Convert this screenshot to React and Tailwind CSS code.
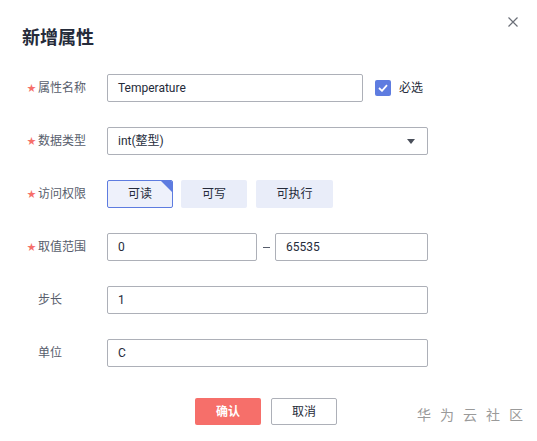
import { useState } from "react";

const font = { fontFamily: 'Roboto, "Noto Sans CJK SC", sans-serif' };

function Label({ text, required }) {
  return (
    <div className="w-[107px] shrink-0 pl-[27px] flex items-center whitespace-nowrap text-[12px] text-[#575d6c]">
      <span className="w-[11px] text-[9px] text-[#f66f6a] leading-none">
        {required ? "★" : ""}
      </span>
      <span>{text}</span>
    </div>
  );
}

function TextBox({ value, className = "" }) {
  return (
    <div
      className={`h-[28px] border border-[#adb0b8] rounded-[2px] flex items-center px-[10px] text-[12px] text-[#252b3a] bg-white ${className}`}
    >
      {value}
    </div>
  );
}

export default function App() {
  const [access, setAccess] = useState("read");
  const [required, setRequired] = useState(true);

  const perms = [
    { key: "read", text: "可读", w: "w-[66px]" },
    { key: "write", text: "可写", w: "w-[66px]" },
    { key: "exec", text: "可执行", w: "w-[77px]" },
  ];

  return (
    <div className="relative w-[537px] h-[441px] bg-white overflow-hidden" style={font}>
      {/* close */}
      <button className="absolute left-[508px] top-[17px] w-[10px] h-[10px]">
        <svg width="10" height="10" viewBox="0 0 10 10">
          <path d="M0.5 0.5 L9.5 9.5 M9.5 0.5 L0.5 9.5" stroke="#6b6f78" strokeWidth="1.2" />
        </svg>
      </button>

      <div className="pt-[24px]">
        <h2 className="pl-[22px] h-[27px] leading-[27px] text-[18px] font-bold text-[#252b3a]">
          新增属性
        </h2>

        <div className="mt-[23px] flex flex-col gap-[25px]">
          {/* name */}
          <div className="flex h-[28px]">
            <Label text="属性名称" required />
            <TextBox value="Temperature" className="w-[256px]" />
            <label
              className="ml-[12px] flex items-center gap-[8px] text-[12px] text-[#252b3a] cursor-pointer"
              onClick={() => setRequired(!required)}
            >
              <span
                className={`w-[16px] h-[16px] rounded-[2px] flex items-center justify-center ${
                  required ? "bg-[#5e7ce0]" : "border border-[#adb0b8]"
                }`}
              >
                {required && (
                  <svg width="10" height="8" viewBox="0 0 10 8">
                    <path d="M1 4 L4 6.8 L9 1.2" stroke="white" strokeWidth="1.8" fill="none" />
                  </svg>
                )}
              </span>
              必选
            </label>
          </div>

          {/* type */}
          <div className="flex h-[28px]">
            <Label text="数据类型" required />
            <div className="w-[321px] h-[28px] border border-[#adb0b8] rounded-[2px] flex items-center justify-between pl-[10px] pr-[12px] text-[12px] text-[#252b3a]">
              <span>int(整型)</span>
              <svg width="8" height="5" viewBox="0 0 8 5">
                <polygon points="0,0 8,0 4,5" fill="#4a4f5a" />
              </svg>
            </div>
          </div>

          {/* access */}
          <div className="flex h-[28px]">
            <Label text="访问权限" required />
            <div className="flex">
              {perms.map((p, i) => {
                const on = access === p.key;
                return (
                  <button
                    key={p.key}
                    onClick={() => setAccess(p.key)}
                    className={`relative h-[28px] ${p.w} ${i === 1 ? "ml-[8px]" : i === 2 ? "ml-[9px]" : ""} rounded-[2px] text-[12px] text-[#252b3a] overflow-hidden ${
                      on ? "bg-[#eef1fb] border border-[#5e7ce0]" : "bg-[#e9edf9]"
                    }`}
                  >
                    {p.text}
                    {on && (
                      <svg className="absolute right-0 top-0" width="11" height="11" viewBox="0 0 11 11">
                        <polygon points="0,0 11,0 11,11" fill="#5e7ce0" />
                      </svg>
                    )}
                  </button>
                );
              })}
            </div>
          </div>

          {/* range */}
          <div className="flex h-[28px]">
            <Label text="取值范围" required />
            <div className="w-[321px] flex items-center">
              <TextBox value="0" className="w-[150px]" />
              <div className="w-[18px] flex justify-center">
                <span className="w-[7px] h-px bg-[#575d6c]"></span>
              </div>
              <TextBox value="65535" className="w-[153px]" />
            </div>
          </div>

          {/* step */}
          <div className="flex h-[28px]">
            <Label text="步长" />
            <TextBox value="1" className="w-[321px]" />
          </div>

          {/* unit */}
          <div className="flex h-[28px]">
            <Label text="单位" />
            <TextBox value="C" className="w-[321px]" />
          </div>
        </div>

        <div className="mt-[31px] flex justify-center gap-[10px] pr-[5px]">
          <button className="w-[66px] h-[27px] rounded-[2px] bg-[#f66f6a] text-white text-[12px] font-bold">
            确认
          </button>
          <button className="w-[66px] h-[27px] rounded-[2px] border border-[#adb0b8] bg-white text-[#252b3a] text-[12px]">
            取消
          </button>
        </div>
      </div>

      {/* watermark */}
      <div className="absolute left-[417px] top-[404px] text-[14px] leading-[22px] tracking-[9px] text-[#9a9a9a]">
        华为云社区
      </div>
    </div>
  );
}
